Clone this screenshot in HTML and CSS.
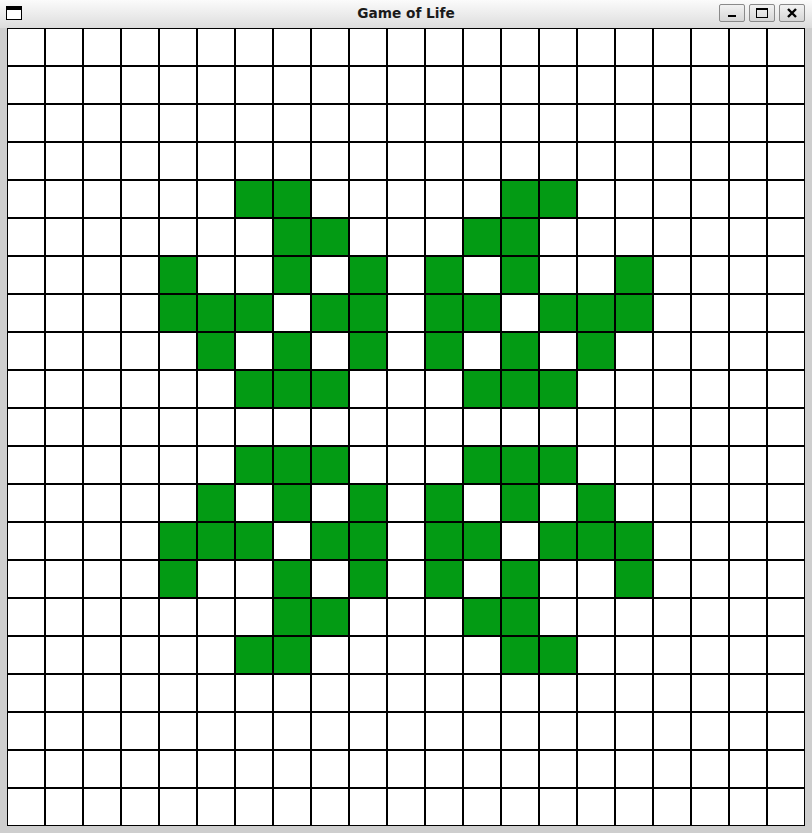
FILE: index.html
```html
<!DOCTYPE html>
<html>
<head>
<meta charset="utf-8">
<title>Game of Life</title>
<link rel="stylesheet" href="styles.css">
</head>
<body>
<div class="window">
  <div class="titlebar">
    <div class="tb-left">
      <svg class="app-icon" width="16" height="14" viewBox="0 0 16 14">
        <rect x="0.5" y="0.5" width="15" height="13" fill="#fff" stroke="#000"/>
        <rect x="0" y="0" width="16" height="4" fill="#000"/>
      </svg>
    </div>
    <div class="title">Game of Life</div>
    <div class="tb-right">
      <div class="wbtn">
        <svg width="26" height="18" viewBox="0 0 26 18"><rect x="9" y="11" width="8" height="2" fill="#000"/></svg>
      </div>
      <div class="wbtn">
        <svg width="26" height="18" viewBox="0 0 26 18"><rect x="7.5" y="4.5" width="11" height="9" fill="none" stroke="#000"/><rect x="7" y="4" width="12" height="2" fill="#000"/></svg>
      </div>
      <div class="wbtn">
        <svg width="26" height="18" viewBox="0 0 26 18"><path d="M9 5 L17 13 M17 5 L9 13" stroke="#000" stroke-width="2.4" fill="none"/></svg>
      </div>
    </div>
  </div>
  <div class="content">
    <div class="board">
<div class="cell"></div><div class="cell"></div><div class="cell"></div><div class="cell"></div><div class="cell"></div><div class="cell"></div><div class="cell"></div><div class="cell"></div><div class="cell"></div><div class="cell"></div><div class="cell"></div><div class="cell"></div><div class="cell"></div><div class="cell"></div><div class="cell"></div><div class="cell"></div><div class="cell"></div><div class="cell"></div><div class="cell"></div><div class="cell"></div><div class="cell"></div>
<div class="cell"></div><div class="cell"></div><div class="cell"></div><div class="cell"></div><div class="cell"></div><div class="cell"></div><div class="cell"></div><div class="cell"></div><div class="cell"></div><div class="cell"></div><div class="cell"></div><div class="cell"></div><div class="cell"></div><div class="cell"></div><div class="cell"></div><div class="cell"></div><div class="cell"></div><div class="cell"></div><div class="cell"></div><div class="cell"></div><div class="cell"></div>
<div class="cell"></div><div class="cell"></div><div class="cell"></div><div class="cell"></div><div class="cell"></div><div class="cell"></div><div class="cell"></div><div class="cell"></div><div class="cell"></div><div class="cell"></div><div class="cell"></div><div class="cell"></div><div class="cell"></div><div class="cell"></div><div class="cell"></div><div class="cell"></div><div class="cell"></div><div class="cell"></div><div class="cell"></div><div class="cell"></div><div class="cell"></div>
<div class="cell"></div><div class="cell"></div><div class="cell"></div><div class="cell"></div><div class="cell"></div><div class="cell"></div><div class="cell"></div><div class="cell"></div><div class="cell"></div><div class="cell"></div><div class="cell"></div><div class="cell"></div><div class="cell"></div><div class="cell"></div><div class="cell"></div><div class="cell"></div><div class="cell"></div><div class="cell"></div><div class="cell"></div><div class="cell"></div><div class="cell"></div>
<div class="cell"></div><div class="cell"></div><div class="cell"></div><div class="cell"></div><div class="cell"></div><div class="cell"></div><div class="cell on"></div><div class="cell on"></div><div class="cell"></div><div class="cell"></div><div class="cell"></div><div class="cell"></div><div class="cell"></div><div class="cell on"></div><div class="cell on"></div><div class="cell"></div><div class="cell"></div><div class="cell"></div><div class="cell"></div><div class="cell"></div><div class="cell"></div>
<div class="cell"></div><div class="cell"></div><div class="cell"></div><div class="cell"></div><div class="cell"></div><div class="cell"></div><div class="cell"></div><div class="cell on"></div><div class="cell on"></div><div class="cell"></div><div class="cell"></div><div class="cell"></div><div class="cell on"></div><div class="cell on"></div><div class="cell"></div><div class="cell"></div><div class="cell"></div><div class="cell"></div><div class="cell"></div><div class="cell"></div><div class="cell"></div>
<div class="cell"></div><div class="cell"></div><div class="cell"></div><div class="cell"></div><div class="cell on"></div><div class="cell"></div><div class="cell"></div><div class="cell on"></div><div class="cell"></div><div class="cell on"></div><div class="cell"></div><div class="cell on"></div><div class="cell"></div><div class="cell on"></div><div class="cell"></div><div class="cell"></div><div class="cell on"></div><div class="cell"></div><div class="cell"></div><div class="cell"></div><div class="cell"></div>
<div class="cell"></div><div class="cell"></div><div class="cell"></div><div class="cell"></div><div class="cell on"></div><div class="cell on"></div><div class="cell on"></div><div class="cell"></div><div class="cell on"></div><div class="cell on"></div><div class="cell"></div><div class="cell on"></div><div class="cell on"></div><div class="cell"></div><div class="cell on"></div><div class="cell on"></div><div class="cell on"></div><div class="cell"></div><div class="cell"></div><div class="cell"></div><div class="cell"></div>
<div class="cell"></div><div class="cell"></div><div class="cell"></div><div class="cell"></div><div class="cell"></div><div class="cell on"></div><div class="cell"></div><div class="cell on"></div><div class="cell"></div><div class="cell on"></div><div class="cell"></div><div class="cell on"></div><div class="cell"></div><div class="cell on"></div><div class="cell"></div><div class="cell on"></div><div class="cell"></div><div class="cell"></div><div class="cell"></div><div class="cell"></div><div class="cell"></div>
<div class="cell"></div><div class="cell"></div><div class="cell"></div><div class="cell"></div><div class="cell"></div><div class="cell"></div><div class="cell on"></div><div class="cell on"></div><div class="cell on"></div><div class="cell"></div><div class="cell"></div><div class="cell"></div><div class="cell on"></div><div class="cell on"></div><div class="cell on"></div><div class="cell"></div><div class="cell"></div><div class="cell"></div><div class="cell"></div><div class="cell"></div><div class="cell"></div>
<div class="cell"></div><div class="cell"></div><div class="cell"></div><div class="cell"></div><div class="cell"></div><div class="cell"></div><div class="cell"></div><div class="cell"></div><div class="cell"></div><div class="cell"></div><div class="cell"></div><div class="cell"></div><div class="cell"></div><div class="cell"></div><div class="cell"></div><div class="cell"></div><div class="cell"></div><div class="cell"></div><div class="cell"></div><div class="cell"></div><div class="cell"></div>
<div class="cell"></div><div class="cell"></div><div class="cell"></div><div class="cell"></div><div class="cell"></div><div class="cell"></div><div class="cell on"></div><div class="cell on"></div><div class="cell on"></div><div class="cell"></div><div class="cell"></div><div class="cell"></div><div class="cell on"></div><div class="cell on"></div><div class="cell on"></div><div class="cell"></div><div class="cell"></div><div class="cell"></div><div class="cell"></div><div class="cell"></div><div class="cell"></div>
<div class="cell"></div><div class="cell"></div><div class="cell"></div><div class="cell"></div><div class="cell"></div><div class="cell on"></div><div class="cell"></div><div class="cell on"></div><div class="cell"></div><div class="cell on"></div><div class="cell"></div><div class="cell on"></div><div class="cell"></div><div class="cell on"></div><div class="cell"></div><div class="cell on"></div><div class="cell"></div><div class="cell"></div><div class="cell"></div><div class="cell"></div><div class="cell"></div>
<div class="cell"></div><div class="cell"></div><div class="cell"></div><div class="cell"></div><div class="cell on"></div><div class="cell on"></div><div class="cell on"></div><div class="cell"></div><div class="cell on"></div><div class="cell on"></div><div class="cell"></div><div class="cell on"></div><div class="cell on"></div><div class="cell"></div><div class="cell on"></div><div class="cell on"></div><div class="cell on"></div><div class="cell"></div><div class="cell"></div><div class="cell"></div><div class="cell"></div>
<div class="cell"></div><div class="cell"></div><div class="cell"></div><div class="cell"></div><div class="cell on"></div><div class="cell"></div><div class="cell"></div><div class="cell on"></div><div class="cell"></div><div class="cell on"></div><div class="cell"></div><div class="cell on"></div><div class="cell"></div><div class="cell on"></div><div class="cell"></div><div class="cell"></div><div class="cell on"></div><div class="cell"></div><div class="cell"></div><div class="cell"></div><div class="cell"></div>
<div class="cell"></div><div class="cell"></div><div class="cell"></div><div class="cell"></div><div class="cell"></div><div class="cell"></div><div class="cell"></div><div class="cell on"></div><div class="cell on"></div><div class="cell"></div><div class="cell"></div><div class="cell"></div><div class="cell on"></div><div class="cell on"></div><div class="cell"></div><div class="cell"></div><div class="cell"></div><div class="cell"></div><div class="cell"></div><div class="cell"></div><div class="cell"></div>
<div class="cell"></div><div class="cell"></div><div class="cell"></div><div class="cell"></div><div class="cell"></div><div class="cell"></div><div class="cell on"></div><div class="cell on"></div><div class="cell"></div><div class="cell"></div><div class="cell"></div><div class="cell"></div><div class="cell"></div><div class="cell on"></div><div class="cell on"></div><div class="cell"></div><div class="cell"></div><div class="cell"></div><div class="cell"></div><div class="cell"></div><div class="cell"></div>
<div class="cell"></div><div class="cell"></div><div class="cell"></div><div class="cell"></div><div class="cell"></div><div class="cell"></div><div class="cell"></div><div class="cell"></div><div class="cell"></div><div class="cell"></div><div class="cell"></div><div class="cell"></div><div class="cell"></div><div class="cell"></div><div class="cell"></div><div class="cell"></div><div class="cell"></div><div class="cell"></div><div class="cell"></div><div class="cell"></div><div class="cell"></div>
<div class="cell"></div><div class="cell"></div><div class="cell"></div><div class="cell"></div><div class="cell"></div><div class="cell"></div><div class="cell"></div><div class="cell"></div><div class="cell"></div><div class="cell"></div><div class="cell"></div><div class="cell"></div><div class="cell"></div><div class="cell"></div><div class="cell"></div><div class="cell"></div><div class="cell"></div><div class="cell"></div><div class="cell"></div><div class="cell"></div><div class="cell"></div>
<div class="cell"></div><div class="cell"></div><div class="cell"></div><div class="cell"></div><div class="cell"></div><div class="cell"></div><div class="cell"></div><div class="cell"></div><div class="cell"></div><div class="cell"></div><div class="cell"></div><div class="cell"></div><div class="cell"></div><div class="cell"></div><div class="cell"></div><div class="cell"></div><div class="cell"></div><div class="cell"></div><div class="cell"></div><div class="cell"></div><div class="cell"></div>
<div class="cell"></div><div class="cell"></div><div class="cell"></div><div class="cell"></div><div class="cell"></div><div class="cell"></div><div class="cell"></div><div class="cell"></div><div class="cell"></div><div class="cell"></div><div class="cell"></div><div class="cell"></div><div class="cell"></div><div class="cell"></div><div class="cell"></div><div class="cell"></div><div class="cell"></div><div class="cell"></div><div class="cell"></div><div class="cell"></div><div class="cell"></div>
    </div>
  </div>
</div>
</body>
</html>
```
FILE: styles.css
```css
html, body {
  margin: 0;
  padding: 0;
  background: #cecece;
}
.window {
  width: 812px;
  height: 833px;
  background: #cecece;
  overflow: hidden;
}
.titlebar {
  height: 28px;
  display: grid;
  grid-template-columns: 1fr auto 1fr;
  align-items: start;
  background: linear-gradient(#fbfbfb, #e9e9e9 60%, #dcdcdc);
  box-sizing: border-box;
}
.tb-left {
  padding: 6px 0 0 6px;
}
.app-icon {
  display: block;
}
.title {
  font-family: "DejaVu Sans", sans-serif;
  font-weight: bold;
  font-size: 13.7px;
  color: #1a1a1a;
  line-height: 16px;
  padding-top: 5px;
}
.tb-right {
  display: flex;
  justify-content: flex-end;
  gap: 4px;
  padding: 4px 7px 0 0;
}
.wbtn {
  width: 26px;
  height: 18px;
  box-sizing: border-box;
  border: 1px solid #8a8a8a;
  border-radius: 2px;
  background: linear-gradient(#f2f2f2, #d6d6d6);
  display: flex;
  align-items: center;
  justify-content: center;
}
.wbtn svg {
  display: block;
  margin: -1px;
}
.content {
  padding: 0 7px;
}
.board {
  display: grid;
  grid-template-columns: repeat(21, 38px);
  grid-template-rows: repeat(21, 38px);
  width: 798px;
  height: 798px;
}
.cell {
  box-sizing: border-box;
  border: 1px solid #000;
  background: #fff;
}
.cell.on {
  background: #039b14;
}
```
